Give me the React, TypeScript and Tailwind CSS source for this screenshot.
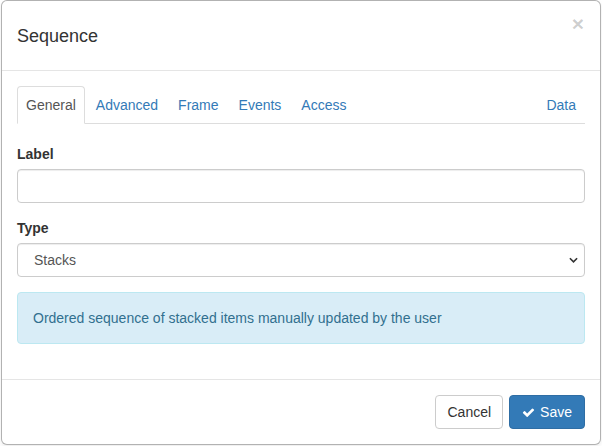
import React from 'react';

const tabs = ['General', 'Advanced', 'Frame', 'Events', 'Access'];

const CheckIcon: React.FC = () => (
  <svg viewBox="0 0 1792 1792" className="w-[13px] h-[13px] mr-[5px] fill-white" aria-hidden="true">
    <path d="M1671 566q0 40-28 68l-724 724-136 136q-28 28-68 28t-68-28l-136-136-362-362q-28-28-28-68t28-68l136-136q28-28 68-28t68 28l294 295 656-657q28-28 68-28t68 28l136 136q28 28 28 68z" />
  </svg>
);

const App: React.FC = () => {
  return (
    <div className="w-[602px] h-[446px] bg-white font-['Liberation_Sans',Arial,sans-serif] text-sm text-[#333]">
      <div className="ml-px w-[600px] bg-white border border-black/30 rounded-[6px] shadow-[0_2px_4px_rgba(0,0,0,0.08)]">
        {/* header */}
        <div className="h-[70px] border-b border-[#e5e5e5] flex items-start justify-between pl-[15px] pr-[16px] pt-[12px]">
          <h4 className="mt-[10px] text-[18px] leading-[26px] font-normal text-[#333]">Sequence</h4>
          <button className="text-[21px] leading-[21px] font-bold text-black/20">×</button>
        </div>

        {/* body */}
        <div className="px-[15px] pt-[15px] pb-[15px]">
          <ul className="flex border-b border-[#ddd]">
            {tabs.map((tab, i) => (
              <li key={tab} className="-mb-px mr-[2px]">
                <a
                  href="#"
                  className={
                    i === 0
                      ? 'block px-2 py-2 leading-5 border border-[#ddd] border-b-transparent rounded-t-[4px] bg-white text-[#555]'
                      : 'block px-2 py-2 leading-5 border border-transparent rounded-t-[4px] text-[#337ab7]'
                  }
                >
                  {tab}
                </a>
              </li>
            ))}
            <li className="-mb-px ml-auto">
              <a href="#" className="block px-2 py-2 leading-5 border border-transparent rounded-t-[4px] text-[#337ab7]">
                Data
              </a>
            </li>
          </ul>

          <div className="mt-5 mb-[15px]">
            <label className="block font-bold leading-5 mb-[5px]">Label</label>
            <input
              type="text"
              className="block w-full h-[34px] px-3 border border-[#ccc] rounded-[4px] shadow-[inset_0_1px_1px_rgba(0,0,0,0.075)] text-[#555] outline-none"
            />
          </div>

          <div className="mb-[15px]">
            <label className="block font-bold leading-5 mb-[5px]">Type</label>
            <div className="relative">
              <select className="block w-full h-[34px] pl-[16px] pr-8 appearance-none border border-[#ccc] rounded-[4px] shadow-[inset_0_1px_1px_rgba(0,0,0,0.075)] text-[#555] bg-white outline-none">
                <option>Stacks</option>
              </select>
              <svg viewBox="0 0 10 6" className="absolute right-[7px] top-[14px] w-[9px] h-[6px] pointer-events-none" aria-hidden="true">
                <path d="M1 1l4 4 4-4" fill="none" stroke="#333" strokeWidth="1.8" />
              </svg>
            </div>
          </div>

          <div className="mb-5 p-[15px] leading-5 bg-[#d9edf7] border border-[#bce8f1] rounded-[4px] text-[#31708f]">
            Ordered sequence of stacked items manually updated by the user
          </div>
        </div>

        {/* footer */}
        <div className="border-t border-[#e5e5e5] p-[15px] flex justify-end gap-[6px]">
          <button className="px-[11px] py-[6px] leading-5 border border-[#ccc] rounded-[4px] bg-white text-[#333]">
            Cancel
          </button>
          <button className="flex items-center px-3 py-[6px] leading-5 border border-[#2e6da4] rounded-[4px] bg-[#337ab7] text-white">
            <CheckIcon />
            Save
          </button>
        </div>
      </div>
    </div>
  );
};

export default App;
